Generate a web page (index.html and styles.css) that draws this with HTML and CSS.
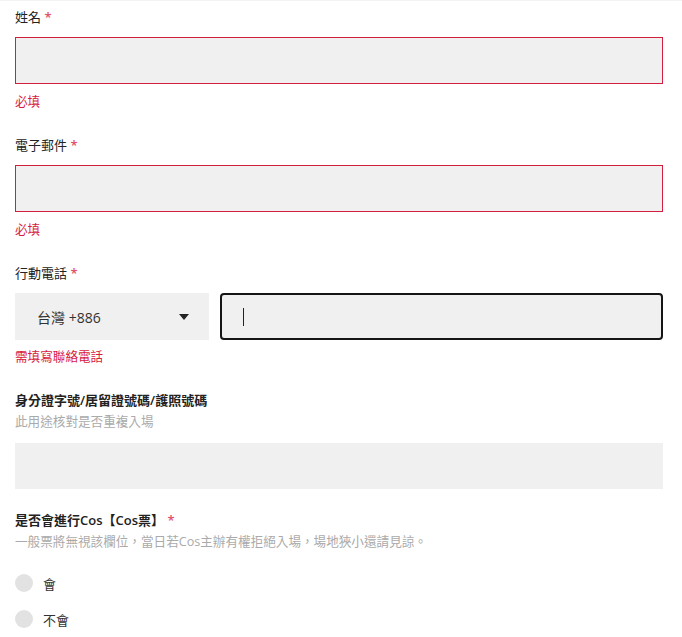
FILE: index.html
```html
<!DOCTYPE html>
<html lang="zh-Hant">
<head>
    <meta charset="UTF-8">
    <meta name="viewport" content="width=device-width, initial-scale=1.0">
    <title>報名表單</title>
    <link rel="stylesheet" href="styles.css">
</head>
<body>
    <form class="form">
        <div class="field">
            <label class="field-label">姓名 <span class="req">*</span></label>
            <div class="input input--invalid"></div>
            <p class="field-error">必填</p>
        </div>

        <div class="field">
            <label class="field-label">電子郵件 <span class="req">*</span></label>
            <div class="input input--invalid"></div>
            <p class="field-error">必填</p>
        </div>

        <div class="field">
            <label class="field-label">行動電話 <span class="req">*</span></label>
            <div class="phone-row">
                <div class="select">
                    <span>台灣 +886</span>
                    <span class="select-arrow"></span>
                </div>
                <div class="input input--focus"><span class="caret"></span></div>
            </div>
            <p class="field-error field-error--tight">需填寫聯絡電話</p>
        </div>

        <div class="field field--plain">
            <label class="field-label field-label--strong">身分證字號/居留證號碼/護照號碼</label>
            <p class="field-hint">此用途核對是否重複入場</p>
            <div class="input input--flat"></div>
        </div>

        <div class="field">
            <label class="field-label field-label--strong">是否會進行Cos【Cos票】 <span class="req">*</span></label>
            <p class="field-hint">一般票將無視該欄位，當日若Cos主辦有權拒絕入場，場地狹小還請見諒。</p>
            <div class="radios">
                <label class="radio"><span class="radio-dot"></span>會</label>
                <label class="radio"><span class="radio-dot"></span>不會</label>
            </div>
        </div>
    </form>
</body>
</html>
```

FILE: styles.css
```css
* {
    box-sizing: border-box;
    margin: 0;
    padding: 0;
}

body {
    font-family: "Open Sans", "Noto Sans CJK TC", sans-serif;
    color: #222;
    background: #fff;
    border-top: 1px solid #f4f4f4;
}

.form {
    width: 648px;
    margin-left: 15px;
    padding-top: 6px;
}

.field {
    margin-bottom: 24px;
}

.field--plain {
    margin-bottom: 21px;
}

.field-label {
    display: block;
    font-size: 13px;
    font-weight: 400;
    line-height: 20px;
    margin-bottom: 10px;
}

.field-label--strong {
    font-weight: 600;
}

.field-hint + .input,
.field-hint + .radios {
    margin-top: 12px;
}

.req {
    color: #e0526a;
    font-weight: 600;
}

.field-label + .field-hint {
    margin-top: -7px;
}

.field-hint {
    font-size: 12.6px;
    line-height: 18px;
    color: #aaa;
}

.field-error {
    margin-top: 9px;
    font-size: 12.6px;
    line-height: 18px;
    color: #d8193f;
}

.field-error--tight {
    margin-top: 8px;
}

.input {
    height: 47px;
    background: #f0f0f0;
    border: 1px solid transparent;
}

.input--invalid {
    border-color: #d31f3e;
}

.input--flat {
    height: 46px;
}

.input--focus {
    flex: 1;
    border: 2px solid #151515;
    border-radius: 4px;
    display: flex;
    align-items: center;
    padding-left: 21px;
}

.caret {
    width: 1px;
    height: 18px;
    background: #222;
}

.phone-row {
    display: flex;
    gap: 11px;
}

.select {
    width: 194px;
    height: 47px;
    background: #f0f0f0;
    display: flex;
    align-items: center;
    justify-content: space-between;
    padding: 0 20px 0 22px;
    font-size: 14px;
    color: #333;
}

.select-arrow {
    width: 0;
    height: 0;
    border-left: 5.5px solid transparent;
    border-right: 5.5px solid transparent;
    border-top: 6px solid #222;
}

.radios {
    display: flex;
    flex-direction: column;
    gap: 18px;
    padding-top: 11px;
}

.radio {
    display: flex;
    align-items: center;
    gap: 10px;
    height: 18px;
    font-size: 13px;
    color: #333;
}

.radio-dot {
    width: 18px;
    height: 18px;
    border-radius: 50%;
    background: #e2e2e2;
}
```
